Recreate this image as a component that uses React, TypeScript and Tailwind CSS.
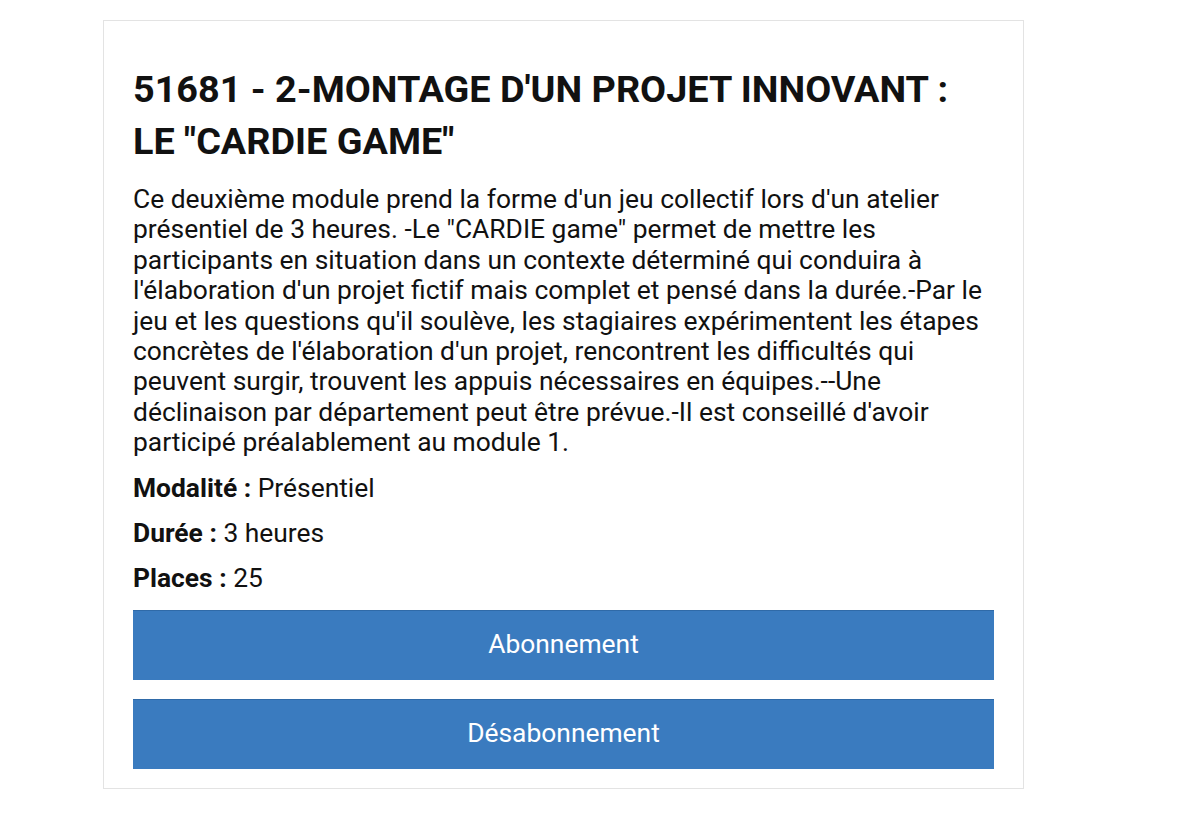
export default function App() {
  return (
    <div className="min-h-[827px] bg-white pt-[20px] pl-[103px]" style={{ fontFamily: "Roboto, 'Liberation Sans', sans-serif" }}>
      <div className="w-[921px] border border-[#e3e3e3] px-[29px] pt-[42px] pb-[19px] text-[#111]">
        <h1 className="text-[37.8px] font-bold leading-[52px]">
          51681 - 2-MONTAGE D'UN PROJET INNOVANT : LE "CARDIE GAME"
        </h1>
        <p className="mt-[17px] text-[26.4px] leading-[30.4px]">
          Ce deuxième module prend la forme d'un jeu collectif lors d'un atelier présentiel de 3 heures. -Le "CARDIE game" permet de mettre les participants en situation dans un contexte déterminé qui conduira à l'élaboration d'un projet fictif mais complet et pensé dans la durée.-Par le jeu et les questions qu'il soulève, les stagiaires expérimentent les étapes concrètes de l'élaboration d'un projet, rencontrent les difficultés qui peuvent surgir, trouvent les appuis nécessaires en équipes.--Une déclinaison par département peut être prévue.-Il est conseillé d'avoir participé préalablement au module 1.
        </p>
        <div className="mt-[15px] flex flex-col gap-[15px] text-[26.4px] leading-[30px]">
          <p><span className="font-bold">Modalité :</span> Présentiel</p>
          <p><span className="font-bold">Durée :</span> 3 heures</p>
          <p><span className="font-bold">Places :</span> 25</p>
        </div>
        <div className="mt-[17px] flex flex-col gap-[19px]">
          <button className="h-[70px] w-full border-t border-[#2f6aa8] bg-[#3a7bbf] text-[26.4px] text-white">Abonnement</button>
          <button className="h-[70px] w-full border-t border-[#2f6aa8] bg-[#3a7bbf] text-[26.4px] text-white">Désabonnement</button>
        </div>
      </div>
    </div>
  );
}
